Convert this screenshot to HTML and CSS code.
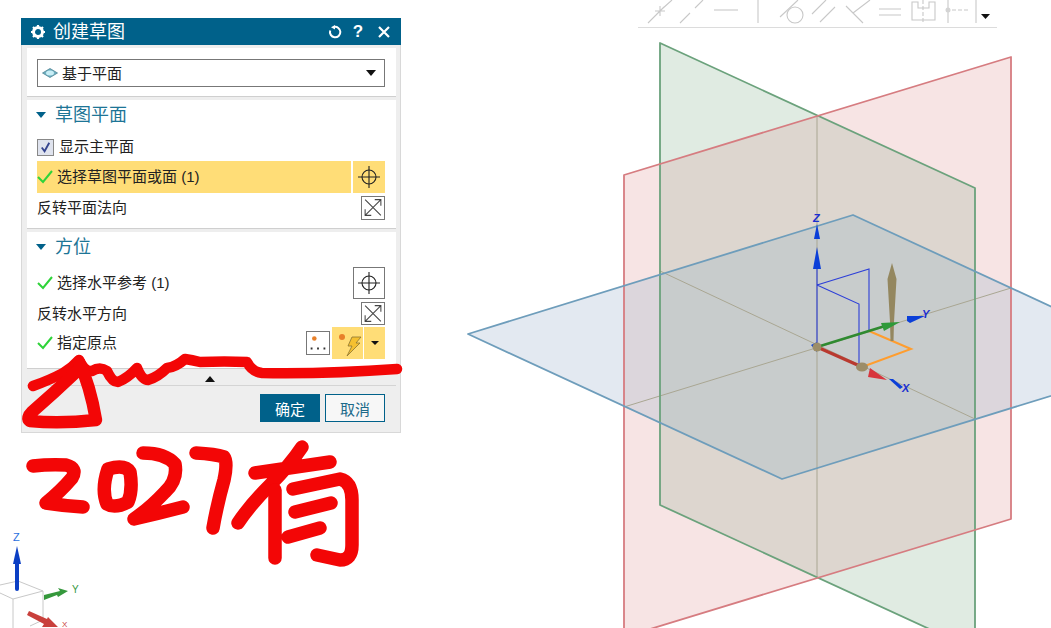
FILE: index.html
```html
<!DOCTYPE html>
<html lang="zh">
<head>
<meta charset="utf-8">
<title>创建草图</title>
<link rel="stylesheet" href="styles.css">
</head>
<body>
<main class="screen">
  <svg class="canvas" viewBox="0 0 1051 628" aria-hidden="true">
    <g class="toolbar">
      <path d="M648 23L658 13M662 9L672 0M655 11L665 11M660 6L660 16M656 15L664 7"/>
      <path d="M680 23L690 13M695 8L703 0"/>
      <path d="M714 10H738"/>
      <path d="M758 0V23"/>
      <circle cx="795" cy="15" r="8"/>
      <path d="M780 17L798 0"/>
      <path d="M812 14L826 0M820 22L835 7"/>
      <path d="M846 6L863 23M853 13L870 0"/>
      <path d="M879 9H901M879 15H901"/>
      <path d="M912 2V20H935V2H929V8H918V2Z"/>
      <path class="dash" d="M923 0V22"/>
      <path d="M948 0V23"/>
      <circle class="dot" cx="948" cy="10" r="2.500"/>
      <path class="dash" d="M952 10H968"/>
      <path d="M976 0V23"/>
      <path class="rule" d="M638 27.500H997"/>
      <path class="black" d="M981 14H990L985.500 19Z"/>
    </g>
    <g class="fills">
      <polygon class="fill-green" points="660,43 975,188 975,650 660,505"/>
      <polygon class="fill-red" points="624,175 1011,57 1011,519 624,637"/>
      <polygon class="fill-blue" points="468,334 853,215 1167,360 782,479"/>
      <polygon class="fill-beige" points="660,164 817,116 975,188 975,530 817,578 660,505"/>
      <polygon class="fill-lilac" points="624,286 660,275 660,423 624,407"/>
      <polygon class="fill-lilac" points="975,271 1011,288 1011,408 975,419"/>
      <polygon class="fill-grey" points="660,275 853,215 975,271 975,419 782,479 660,423"/>
    </g>
    <g class="seams">
      <path d="M817 116V578"/>
      <path d="M660 271L975 419"/>
      <path d="M624 407L1011 288"/>
    </g>
    <g class="edges">
      <polygon class="edge-green" points="660,43 975,188 975,650 660,505"/>
      <polygon class="edge-red" points="624,175 1011,57 1011,519 624,637"/>
      <polygon class="edge-blue" points="468,334 853,215 1167,360 782,479"/>
    </g>
    <g class="triad">
      <path class="thin" d="M817 347V269M817 285L869 269V331M817 285L859 304V367"/>
      <path class="orange" d="M869 331L911 349L862 367"/>
      <polygon class="beige" points="892,263 896.500,279 894,322 893.500,341 890.500,341 890,322 887.500,279"/>
      <path class="green-shaft" d="M817 347L885 326"/>
      <polygon class="green-fill" points="881,323 900,322 884,331"/>
      <path class="red-shaft" d="M817 347L862 367"/>
      <polygon class="red-fill" points="870,368 887,380 868,377"/>
      <polygon class="blue-fill" points="817,247 821,269 813,269"/>
      <polygon class="blue-fill" points="817,224 820,239 814,239"/>
      <polygon class="blue-fill" points="907,321 907,316 925,316 910,323"/>
      <polygon class="blue-fill" points="889,379 893,379 903,387 900,389"/>
      <polygon class="blue-fill" points="811,345 817,342 817,352"/>
      <circle class="ball" cx="817" cy="347" r="4.500"/>
      <ellipse class="ball" cx="862" cy="367" rx="6" ry="4.500"/>
      <text class="label-blue" x="813" y="222">Z</text>
      <text class="label-blue" x="922" y="318">Y</text>
      <text class="label-blue" x="902" y="392">X</text>
    </g>
    <g class="mini">
      <path class="cube" d="M0 593L13 599L43 591L18 581L0 585M43 591V620L30 626M13 599V628"/>
      <path class="mini-blue" d="M17 560V589"/>
      <polygon class="mini-blue-fill" points="17,546 21,564 13,564"/>
      <polygon class="mini-green" points="44,595 60,591 58,588 68,591 58,597 57,595 44,600"/>
      <polygon class="mini-red" points="29,611 47,619 48,617 58,627 42,627 44,624 27,615"/>
      <text class="mini-label z" x="13" y="541">Z</text>
      <text class="mini-label y" x="72" y="593">Y</text>
      <text class="mini-label x" x="62" y="627">X</text>
    </g>
  </svg>

  <section class="dialog">
    <header class="titlebar">
      <svg class="gear" viewBox="0 0 16 16" aria-hidden="true"><circle cx="8" cy="8" r="4.500"/><path d="M8 1V4M8 12V15M1 8H4M12 8H15M3 3L5 5M11 11L13 13M13 3L11 5M5 11L3 13"/></svg>
      <h1 class="title">创建草图</h1>
      <svg class="reset" viewBox="0 0 14 14" aria-hidden="true"><path d="M6 2A5.200 5.200 0 1 1 2.200 5.500"/><path class="tip" d="M3 2.200L7 0V4.500Z"/></svg>
      <span class="help">?</span>
      <svg class="close" viewBox="0 0 14 14" aria-hidden="true"><path d="M2 2L12 12M12 2L2 12"/></svg>
    </header>

    <div class="body">
      <div class="panel type-panel">
        <div class="select">
          <svg class="plane-icon" viewBox="0 0 16 10" aria-hidden="true"><path class="outer" d="M0.500 5L8 0.500L15.500 5L8 9.500Z"/><ellipse class="inner" cx="8" cy="5" rx="4" ry="2.500"/></svg>
          <span class="select-text">基于平面</span>
          <span class="caret"></span>
        </div>
      </div>

      <div class="panel plane-panel">
        <div class="group-head"><span class="arrow"></span><h2 class="group-title">草图平面</h2></div>
        <label class="row check-row">
          <span class="checkbox"><svg viewBox="0 0 16 16" aria-hidden="true"><path d="M4 8L7 12L12 3"/></svg></span>
          <span class="text">显示主平面</span>
        </label>
        <div class="row active-row">
          <div class="active-label">
            <svg class="tick" viewBox="0 0 16 14" aria-hidden="true"><path d="M1 7L6 12L15 1"/></svg>
            <span class="text">选择草图平面或面 (1)</span>
          </div>
          <span class="target-btn active"><svg class="target" viewBox="0 0 24 24" aria-hidden="true"><circle cx="12" cy="12" r="7"/><path d="M1 12H23M12 1V23"/></svg></span>
        </div>
        <div class="row flip-row">
          <span class="text">反转平面法向</span>
          <span class="flip-btn"><svg class="flip" viewBox="0 0 24 24" aria-hidden="true"><path d="M3 3L21 21M21 3L3 21M14 3H21V10M3 14V21H10"/></svg></span>
        </div>
      </div>

      <div class="panel orient-panel">
        <div class="group-head"><span class="arrow"></span><h2 class="group-title">方位</h2></div>
        <div class="row ref-row">
          <div class="ticked">
            <svg class="tick" viewBox="0 0 16 14" aria-hidden="true"><path d="M1 7L6 12L15 1"/></svg>
            <span class="text">选择水平参考 (1)</span>
          </div>
          <span class="target-btn boxed"><svg class="target" viewBox="0 0 24 24" aria-hidden="true"><circle cx="12" cy="12" r="7"/><path d="M1 12H23M12 1V23"/></svg></span>
        </div>
        <div class="row flip-row compact">
          <span class="text">反转水平方向</span>
          <span class="flip-btn"><svg class="flip" viewBox="0 0 24 24" aria-hidden="true"><path d="M3 3L21 21M21 3L3 21M14 3H21V10M3 14V21H10"/></svg></span>
        </div>
        <div class="row origin-row">
          <div class="ticked">
            <svg class="tick" viewBox="0 0 16 14" aria-hidden="true"><path d="M1 7L6 12L15 1"/></svg>
            <span class="text">指定原点</span>
          </div>
          <div class="origin-tools">
            <span class="dots-btn"><svg viewBox="0 0 24 24" aria-hidden="true"><circle class="orange-dot" cx="8" cy="7" r="2.500"/><path class="dots" d="M4 18H6M11 18H13M18 18H20"/></svg></span>
            <span class="snap-btn"><svg viewBox="0 0 30 32" aria-hidden="true"><circle class="orange-dot" cx="10" cy="10" r="3"/><path class="bolt" d="M20 10H29L24 16H28L15 29L20 19H16Z"/></svg></span>
            <span class="snap-drop"><span class="caret small"></span></span>
          </div>
        </div>
      </div>

      <div class="collapse"><span class="up"></span></div>
      <div class="actions">
        <button class="btn primary" type="button">确定</button>
        <button class="btn" type="button">取消</button>
      </div>
    </div>
  </section>

  <svg class="ink" viewBox="0 0 1051 628" aria-hidden="true">
    <path d="M33 386Q50 380 63 373Q72 368 79 360Q85 372 92 371Q100 366 107 371Q112 382 118 382Q128 378 137 368Q142 380 148 380Q158 377 167 368Q176 367 185 359Q192 360 200 362Q225 361 247 362Q252 372 262 373Q330 374 397 369"/>
    <path class="tri" d="M79 362Q90 385 96 420Q60 424 30 421Q26 418 32 412Q55 392 76 372"/>
    <path class="num" d="M33 466Q50 464 66 465Q78 468 72 478Q60 492 46 503Q65 506 83 507"/>
    <path class="num" d="M108 469Q125 464 130 472Q133 490 128 502Q115 509 107 504Q101 490 108 469Z"/>
    <path class="num" d="M143 453Q165 453 175 464Q178 480 165 492Q150 508 134 519Q160 513 183 507"/>
    <path class="num" d="M196 453Q215 454 224 457Q228 462 224 480Q217 505 213 528"/>
    <path class="num" d="M302 447Q290 465 270 485Q250 505 238 523M255 473L330 462"/>
    <path class="num" d="M275 490V558M293 489L340 479Q352 482 352 500V545Q352 560 340 560L317 555M295 512L331 503M288 537L320 528"/>
  </svg>
</main>
</body>
</html>
```

FILE: styles.css
```css
* {
  box-sizing: border-box;
}

html,
body {
  margin: 0;
  background: #fff;
}

.screen {
  position: relative;
  width: 1051px;
  height: 628px;
  overflow: hidden;
  font-family: "Liberation Sans", "Noto Sans CJK SC", sans-serif;
  font-size: 15px;
  color: #222;
}

.canvas,
.ink {
  position: absolute;
  left: 0;
  top: 0;
  width: 1051px;
  height: 628px;
  display: block;
}

.ink {
  z-index: 2;
  pointer-events: none;
}

.ink path {
  fill: none;
  stroke: #f30606;
  stroke-width: 10.500;
  stroke-linecap: round;
  stroke-linejoin: round;
}

.ink .tri {
  stroke-width: 12.500;
}

.ink .num {
  stroke-width: 13.500;
}

/* toolbar ghosts */
.toolbar path,
.toolbar circle {
  fill: none;
  stroke: #c8c8c8;
  stroke-width: 1.100;
}

.toolbar .dash {
  stroke-dasharray: 4 2;
}

.toolbar .dot {
  fill: #d4d4d4;
  stroke: none;
}

.toolbar .rule {
  stroke: #dcdcdc;
  stroke-width: 1;
}

.toolbar .black {
  fill: #111;
  stroke: none;
}

/* planes */
.fill-green {
  fill: #e0ebe2;
}

.fill-red {
  fill: #f7e4e4;
}

.fill-blue {
  fill: #e3e9f1;
}

.fill-beige {
  fill: #ddd6cf;
}

.fill-lilac {
  fill: #dcd6dc;
}

.fill-grey {
  fill: #c8cccc;
}

.edges polygon {
  fill: none;
  stroke-width: 1.800;
  stroke-linejoin: round;
}

.edge-green {
  stroke: #6ba27c;
}

.edge-red {
  stroke: #d67c80;
}

.edge-blue {
  stroke: #6e9dbb;
}

.seams path {
  fill: none;
  stroke: #a9a692;
  stroke-width: 1;
}

/* triad */
.thin {
  fill: none;
  stroke: #2d3fd8;
  stroke-width: 1.100;
}

.orange {
  fill: none;
  stroke: #ff9d2e;
  stroke-width: 2;
}

.beige {
  fill: #94875f;
}

.green-shaft {
  fill: none;
  stroke: #2f8a30;
  stroke-width: 2.400;
}

.green-fill {
  fill: #2e9a3a;
}

.red-shaft {
  fill: none;
  stroke: #b9392f;
  stroke-width: 3.200;
}

.red-fill {
  fill: #d8353d;
}

.blue-fill {
  fill: #0b3fd8;
}

.ball {
  fill: #9c8d68;
}

.triad text {
  font-size: 11px;
  font-weight: 700;
  font-style: italic;
}

.label-blue {
  fill: #1c2fd0;
}

/* small corner triad */
.cube {
  fill: none;
  stroke: #c8c8c8;
  stroke-width: 1;
}

.mini-blue {
  fill: none;
  stroke: #0b3fc4;
  stroke-width: 4;
  stroke-linecap: round;
}

.mini-blue-fill {
  fill: #0b3fc4;
}

.mini-green {
  fill: #35983c;
}

.mini-red {
  fill: #c9403c;
}

.mini-label {
  font-size: 10px;
}

.mini-label.z {
  fill: #2a6fe0;
  font-size: 11px;
}

.mini-label.y {
  fill: #35983c;
}

.mini-label.x {
  fill: #c9403c;
  font-size: 8px;
}

/* dialog */
.dialog {
  position: absolute;
  left: 21px;
  top: 18px;
  width: 380px;
  height: 415px;
  z-index: 1;
  display: flex;
  flex-direction: column;
  background: #eeeeee;
  border: 1px solid #d8d8d8;
  border-top: 0;
}

.titlebar {
  height: 27px;
  margin: 0 -1px;
  display: flex;
  align-items: center;
  padding: 0 10px 0 9px;
  background: #00618a;
  color: #fff;
  flex: none;
}

.gear {
  width: 16px;
  height: 16px;
  flex: none;
}

.gear circle {
  fill: none;
  stroke: #fff;
  stroke-width: 3;
}

.gear path {
  fill: none;
  stroke: #fff;
  stroke-width: 2.200;
}

.title {
  margin: 2px auto 0 7px;
  font-size: 18px;
  font-weight: 400;
  line-height: 25px;
}

.reset {
  width: 14px;
  height: 14px;
  flex: none;
}

.reset path {
  fill: none;
  stroke: #fff;
  stroke-width: 2;
}

.reset .tip {
  fill: #fff;
  stroke: none;
}

.help {
  width: 12px;
  margin-left: 10px;
  font-size: 17px;
  font-weight: 700;
  line-height: 27px;
  text-align: center;
}

.close {
  width: 14px;
  height: 14px;
  margin-left: 13px;
  flex: none;
}

.close path {
  fill: none;
  stroke: #fff;
  stroke-width: 2.200;
}

.body {
  flex: 1;
  display: flex;
  flex-direction: column;
  padding: 3px 4px 0 5px;
}

.panel {
  background: #fff;
  padding: 0 11px 0 10px;
  border-bottom: 1px solid #cfcfcf;
}

.type-panel {
  height: 49px;
  padding-top: 11px;
  margin-bottom: 3px;
}

.plane-panel {
  height: 129px;
  margin-bottom: 3px;
}

.orient-panel {
  height: 137px;
}

.select {
  height: 28px;
  display: flex;
  align-items: center;
  padding: 0 8px 0 4px;
  border: 1px solid #777;
}

.plane-icon {
  width: 16px;
  height: 10px;
  flex: none;
}

.plane-icon .outer {
  fill: #6fb0c2;
  stroke: #4f8494;
  stroke-width: 0.800;
}

.plane-icon .inner {
  fill: #c9eef6;
}

.select-text {
  margin-left: 4px;
  padding-bottom: 2px;
}

.caret {
  margin-left: auto;
  width: 0;
  height: 0;
  border-left: 5px solid transparent;
  border-right: 5px solid transparent;
  border-top: 6px solid #111;
}

.caret.small {
  margin: 0;
  border-left-width: 4px;
  border-right-width: 4px;
  border-top-width: 4px;
}

.group-head {
  height: 30px;
  display: flex;
  align-items: center;
}

.arrow {
  width: 0;
  height: 0;
  margin: 0 9px 0 -1px;
  border-left: 5px solid transparent;
  border-right: 5px solid transparent;
  border-top: 6px solid #00618a;
}

.group-title {
  margin: 0 0 4px;
  font-size: 18px;
  font-weight: 400;
  color: #1d7596;
}

.text {
  padding-bottom: 3px;
}

.row {
  display: flex;
  align-items: center;
  justify-content: space-between;
}

.check-row {
  height: 28px;
  margin-top: 3px;
  justify-content: flex-start;
  gap: 5px;
}

.checkbox {
  width: 17px;
  height: 17px;
  border: 1px solid #888;
  background: #dfe3ee;
  display: flex;
}

.checkbox svg {
  width: 15px;
  height: 15px;
}

.checkbox path {
  fill: none;
  stroke: #34448f;
  stroke-width: 2;
}

.active-row {
  height: 32px;
}

.active-label {
  width: 314px;
  height: 32px;
  display: flex;
  align-items: center;
  background: #ffdd77;
}

.ticked {
  display: flex;
  align-items: center;
}

.tick {
  width: 16px;
  height: 14px;
  margin-right: 4px;
  flex: none;
}

.tick path {
  fill: none;
  stroke: #2fd33a;
  stroke-width: 2;
}

.target-btn {
  width: 32px;
  height: 32px;
  display: flex;
  align-items: center;
  justify-content: center;
}

.target-btn.active {
  background: #ffdd77;
}

.target-btn.boxed {
  border: 1px solid #777;
}

.target {
  width: 24px;
  height: 24px;
}

.target circle,
.target path {
  fill: none;
  stroke: #222;
  stroke-width: 1.100;
}

.flip-row {
  height: 24px;
  margin-top: 3px;
}

.flip-row.compact {
  height: 23px;
}

.flip-btn {
  width: 24px;
  height: 100%;
  display: flex;
  border: 1px solid #777;
}

.flip {
  width: 22px;
  height: 21px;
}

.flip path {
  fill: none;
  stroke: #444;
  stroke-width: 1.200;
}

.ref-row {
  height: 32px;
  margin-top: 5px;
}

.origin-row {
  height: 32px;
  margin-top: 2px;
}

.origin-tools {
  display: flex;
  align-items: center;
}

.dots-btn {
  width: 24px;
  height: 24px;
  margin-right: 2px;
  border: 1px solid #777;
  display: flex;
}

.dots-btn svg {
  width: 22px;
  height: 22px;
}

.orange-dot {
  fill: #e8802a;
}

.dots {
  fill: none;
  stroke: #333;
  stroke-width: 2;
}

.snap-btn {
  width: 31px;
  height: 32px;
  background: #ffdd77;
  display: flex;
}

.snap-btn svg {
  width: 30px;
  height: 32px;
}

.bolt {
  fill: #f5c030;
  stroke: #8a7430;
  stroke-width: 0.800;
}

.snap-drop {
  width: 22px;
  height: 32px;
  background: #ffdd77;
  border-left: 1px solid #fff;
  display: flex;
  align-items: center;
  justify-content: center;
}

.collapse {
  height: 17px;
  display: flex;
  justify-content: center;
  align-items: flex-start;
  padding: 7px 3px 0 0;
  border-bottom: 1px solid #d4d4d4;
}

.up {
  width: 0;
  height: 0;
  border-left: 5px solid transparent;
  border-right: 5px solid transparent;
  border-bottom: 6px solid #111;
}

.actions {
  display: flex;
  justify-content: flex-end;
  gap: 5px;
  padding: 8px 11px 0 0;
}

.btn {
  width: 60px;
  height: 28px;
  padding: 0;
  font: inherit;
  color: #1d6a8a;
  background: #f7f7f7;
  border: 1px solid #00618a;
  border-radius: 0;
}

.btn.primary {
  color: #fff;
  background: #00618a;
}
```
